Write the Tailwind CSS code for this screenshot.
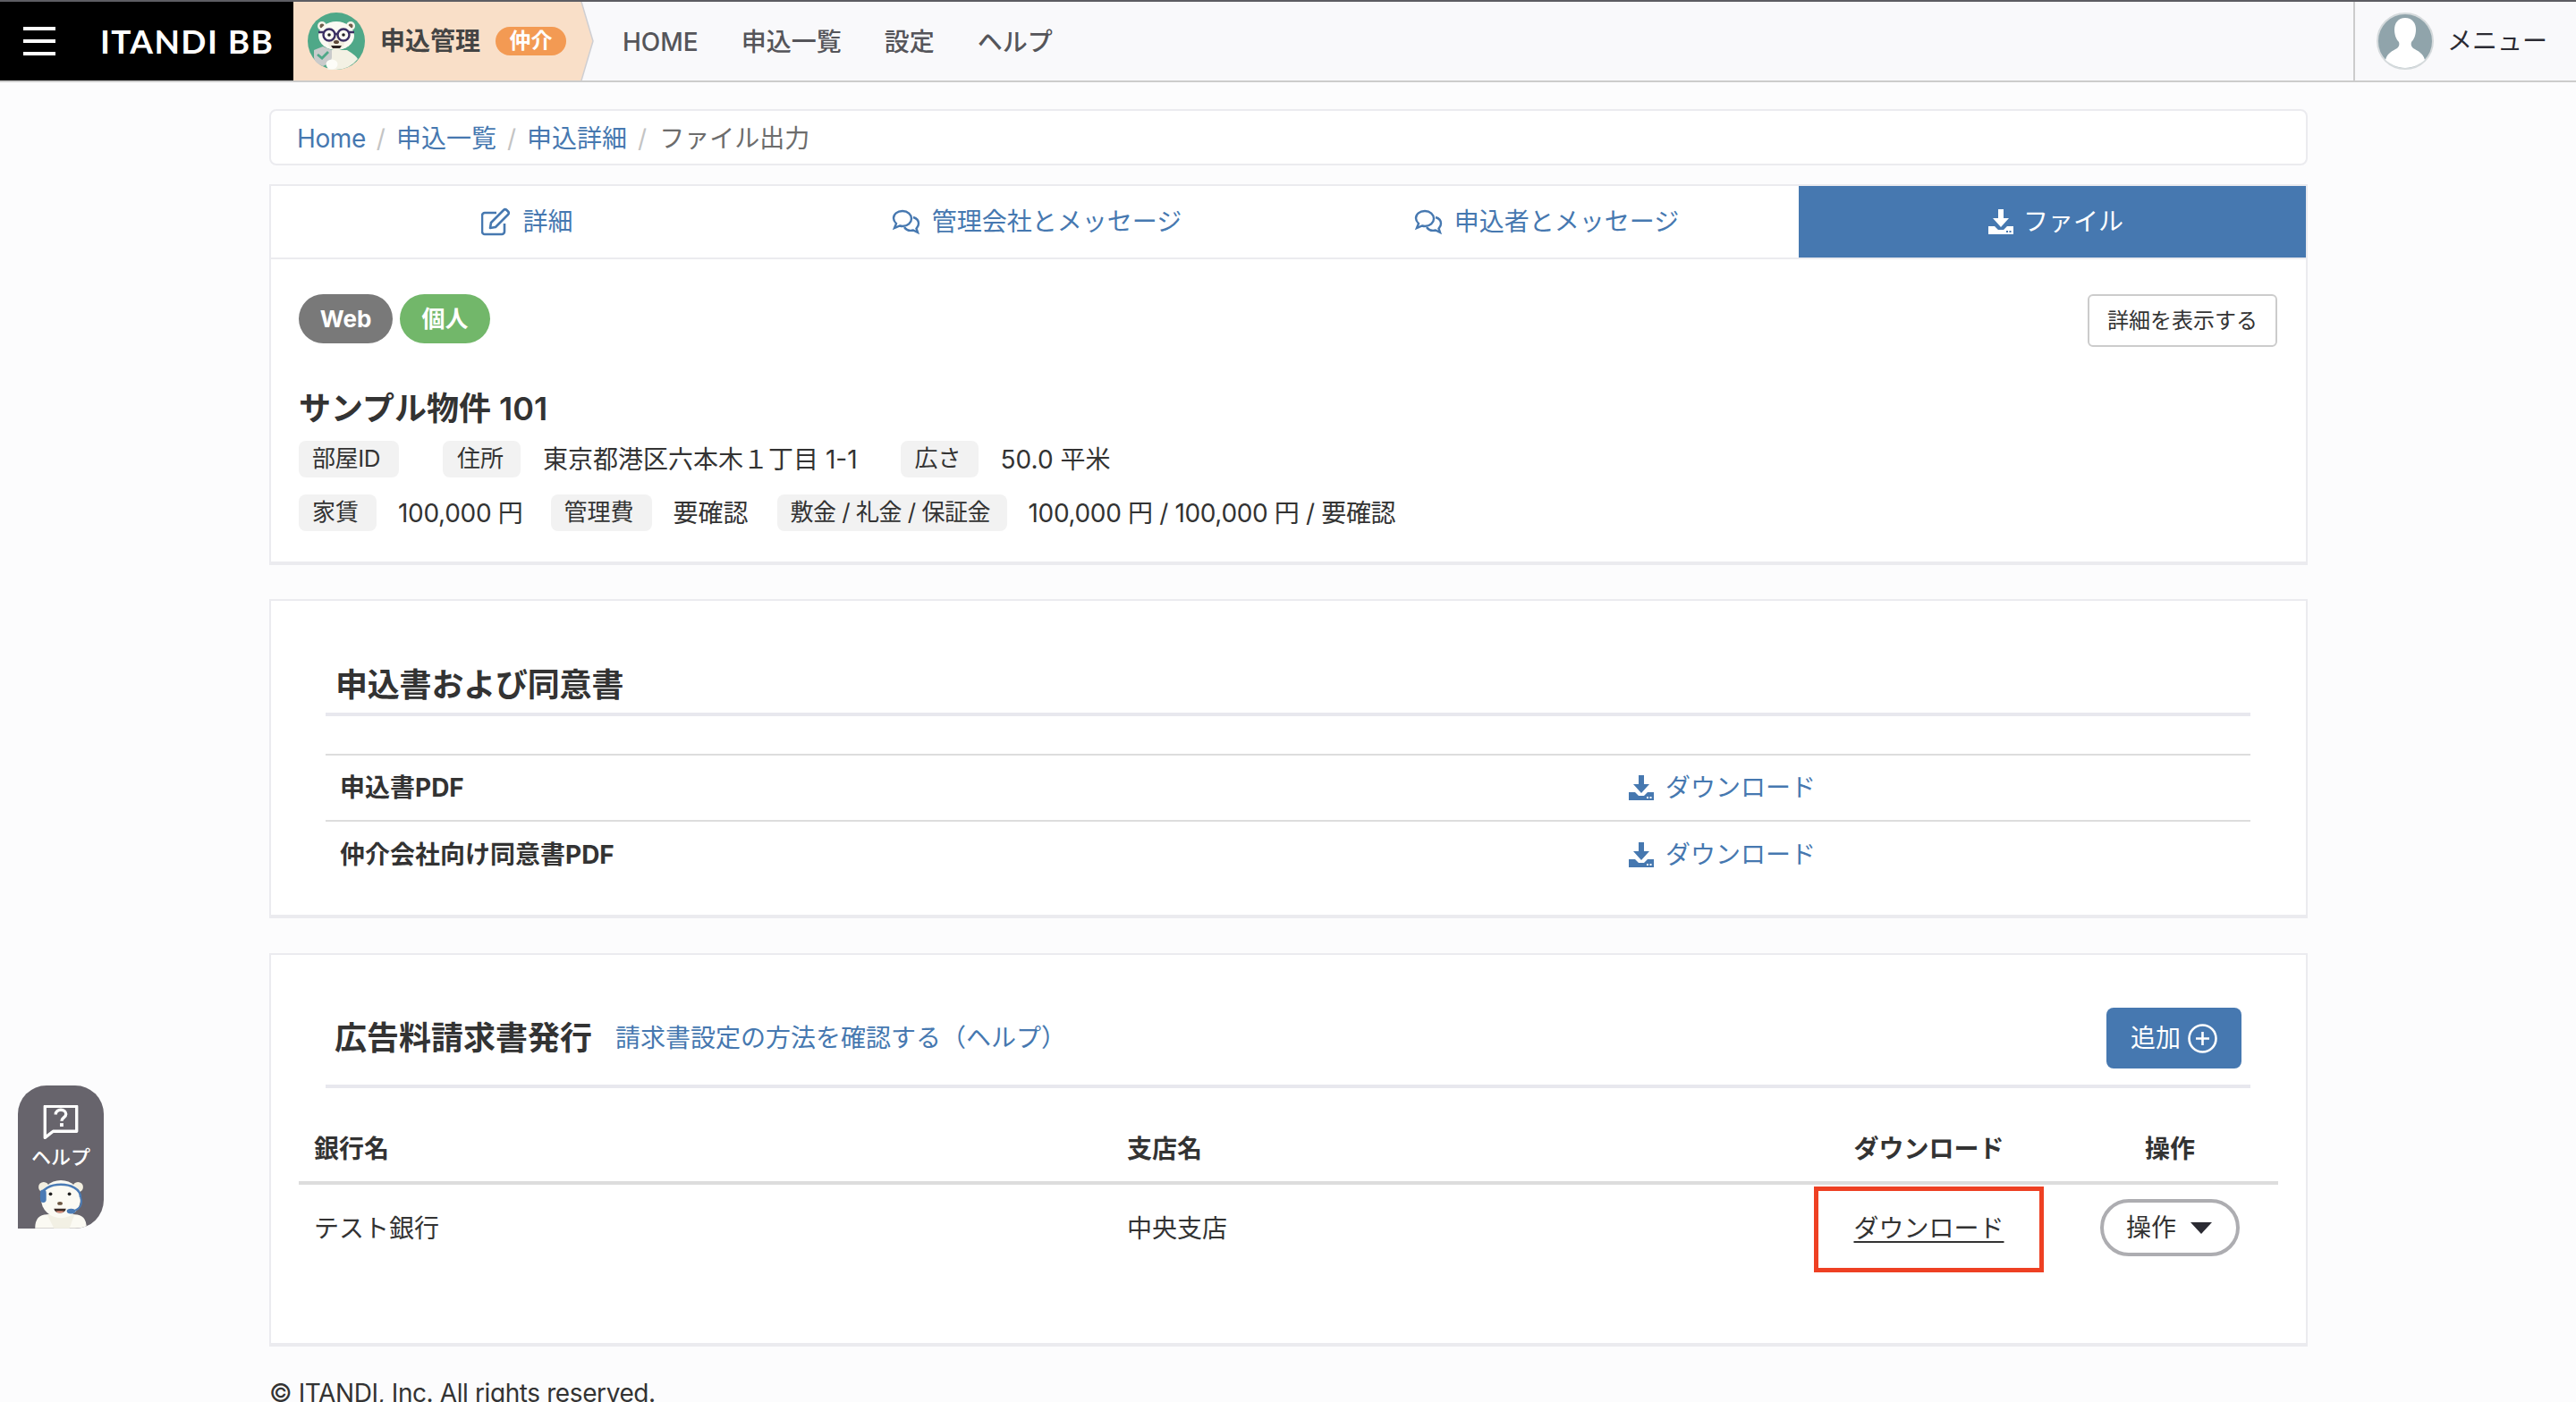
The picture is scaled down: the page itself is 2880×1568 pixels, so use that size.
<!DOCTYPE html>
<html lang="ja">
<head>
    <meta charset="utf-8">
    <title>ITANDI BB ファイル出力</title>
    <script src="https://cdn.jsdelivr.net/npm/@tailwindcss/browser@4"></script>
</head>
<body class="relative h-[1568px] overflow-hidden bg-[#fcfcfd] text-[28px] leading-[40px] text-[#333333] font-['Inter','Noto_Sans_CJK_JP',sans-serif]">

    <!-- header -->
    <header class="flex h-[92px] border-t-2 border-b-2 border-t-[#5d5d63] border-b-[#cccccc] bg-[#f9f9fb]">
        <div class="flex w-[328px] items-center bg-black text-white">
            <div class="ml-[26px] flex h-8 w-9 flex-col justify-between">
                <span class="h-1 bg-white"></span>
                <span class="h-1 bg-white"></span>
                <span class="h-1 bg-white"></span>
            </div>
            <span class="ml-[50px] whitespace-nowrap font-['Lato',sans-serif] text-[37px] font-bold tracking-[1.4px]">ITANDI BB</span>
        </div>
        <div class="flex w-[322px] items-center bg-[#f9dfc8]">
            <svg class="ml-[16px] h-16 w-[64px]" viewBox="0 0 64 64">
                <circle cx="32" cy="32" r="32" fill="#4fa888"/>
                <path d="M22 64 L26 42 H44 Q54 48 56 52 A32 32 0 0 1 32 64Z" fill="#f3f1e4"/>
                <circle cx="16" cy="15" r="5" fill="#f6f4ea"/>
                <circle cx="48" cy="15" r="5" fill="#f6f4ea"/>
                <circle cx="16" cy="15" r="2.500" fill="#6e5d4a"/>
                <circle cx="48" cy="15" r="2.500" fill="#6e5d4a"/>
                <ellipse cx="32" cy="26" rx="20" ry="16" fill="#fbfaf3"/>
                <ellipse cx="32" cy="34" rx="9" ry="8" fill="#f1eee0"/>
                <circle cx="24" cy="25" r="6.500" fill="#fbfaf3" stroke="#3b2f63" stroke-width="2.400"/>
                <circle cx="40" cy="25" r="6.500" fill="#fbfaf3" stroke="#3b2f63" stroke-width="2.400"/>
                <path d="M12 22 H18 M30 24 H34 M46 22 H52" stroke="#3b2f63" stroke-width="2.400"/>
                <circle cx="24" cy="25" r="1.800" fill="#222"/>
                <circle cx="40" cy="25" r="1.800" fill="#222"/>
                <ellipse cx="32" cy="33" rx="3" ry="2" fill="#5a4636"/>
                <path d="M26 37h12l-2 3h-8z" fill="#2a2222"/>
                <path d="M7 42l10-4 10 4v8q0 6-10 10q-10-4-10-10z" fill="#c9cbcb"/>
                <path d="M11 47l5 4 7-7" fill="none" stroke="#4fa888" stroke-width="2.800"/>
                <ellipse cx="27" cy="58" rx="6.500" ry="5.500" fill="#fdfdf8"/>
            </svg>
            <span class="ml-[17px] font-bold text-[#444444]">申込管理</span>
            <span class="ml-[17px] flex h-8 w-[79px] items-center justify-center rounded-full bg-[#f39a53] text-[24px] font-bold text-white">仲介</span>
        </div>
        <svg class="-ml-px h-[88px] w-[15px]" viewBox="0 0 15 88">
            <path d="M0 0 L1 0 L14 44 L1 88 L0 88Z" fill="#f9dfc8"/>
            <path d="M1 0 L14 44 L1 88" fill="none" stroke="#cfcfd3" stroke-width="1.500"/>
        </svg>
        <nav class="ml-[32px] flex items-center gap-[48px] pt-[2px] font-medium text-[#55555a]">
            <a>HOME</a>
            <a>申込一覧</a>
            <a>設定</a>
            <a>ヘルプ</a>
        </nav>
        <div class="ml-auto flex w-[249px] items-center border-l-2 border-[#cccccc] pl-[24px] text-[#2b2b33]">
            <svg class="h-[64px] w-[64px]" viewBox="0 0 64 64">
                <circle cx="32" cy="32" r="31" fill="#90a4ab" stroke="#d5dadc" stroke-width="2"/>
                <path d="M32 6c-8 0-12 6-12 13 0 6 2 11 5 14 1 3 0 5-2 7-5 3-11 5-13 13 5 5 14 9 22 9s17-4 22-9c-2-8-8-10-13-13-2-2-3-4-2-7 3-3 5-8 5-14 0-7-4-13-12-13z" fill="#fff"/>
            </svg>
            <span class="ml-[15px]">メニュー</span>
        </div>
    </header>

    <main class="ml-[301px] w-[2279px]">
        <!-- breadcrumb -->
        <div class="mt-[30px] flex h-[63px] items-center rounded-lg border-2 border-[#ebebef] bg-white pl-[29px] pt-[2px]">
            <a class="tracking-[-0.4px] text-[#4678b0]">Home</a><span class="mx-[12px] text-[#c4c4c4]">/</span>
            <a class="text-[#4678b0]">申込一覧</a><span class="mx-[12px] text-[#c4c4c4]">/</span>
            <a class="text-[#4678b0]">申込詳細</a><span class="mx-[12px] text-[#c4c4c4]">/</span>
            <span class="ml-[2px] text-[#6c6c6c]">ファイル出力</span>
        </div>

        <!-- property card -->
        <section class="mt-[21px] h-[426px] border-2 border-b-4 border-[#ebebef] bg-white">
            <div class="grid h-[82px] grid-cols-[569px_570px_569px_1fr] border-b-2 border-[#ebebef] text-[#4678b0]">
                <a class="flex items-center justify-center gap-[14px] pl-[4px]">
                    <svg class="h-[32px] w-[32px]" viewBox="0 0 32 32" fill="none" stroke="#4678b0" stroke-width="2.600" stroke-linejoin="round">
                        <path d="M26 18v9a3 3 0 0 1-3 3H4a3 3 0 0 1-3-3V9a3 3 0 0 1 3-3h13"/>
                        <path d="M10 23l1-6L25 3a2.500 2.500 0 0 1 3.500 0l1.500 1.500a2.500 2.500 0 0 1 0 3.500L16 22z"/>
                    </svg>
                    <span>詳細</span>
                </a>
                <a class="flex items-center justify-center gap-[13px] pl-[4px]">
                    <svg class="h-[30px] w-[32px]" viewBox="0 0 32 30" fill="none" stroke="#4678b0" stroke-width="2.400">
                        <path d="M12 3C6 3 2 6.500 2 11c0 2.500 1 4 3 6l-2 5 6-2.500c1 .3 2 .5 3 .5 6 0 10-4 10-8.500S18 3 12 3z"/>
                        <path d="M24 10c3.500 1 6 3.500 6 7 0 2-1 4-2.500 5.500l1.500 4.500-5-2.500c-4 1-8-.5-10-3.500"/>
                    </svg>
                    <span>管理会社とメッセージ</span>
                </a>
                <a class="flex items-center justify-center gap-[13px] pl-[5px]">
                    <svg class="h-[30px] w-[32px]" viewBox="0 0 32 30" fill="none" stroke="#4678b0" stroke-width="2.400">
                        <path d="M12 3C6 3 2 6.500 2 11c0 2.500 1 4 3 6l-2 5 6-2.500c1 .3 2 .5 3 .5 6 0 10-4 10-8.500S18 3 12 3z"/>
                        <path d="M24 10c3.500 1 6 3.500 6 7 0 2-1 4-2.500 5.500l1.500 4.500-5-2.500c-4 1-8-.5-10-3.500"/>
                    </svg>
                    <span>申込者とメッセージ</span>
                </a>
                <a class="flex items-center justify-center gap-[11px] pl-[8px] bg-[#4678b0] text-white">
                    <svg class="h-[28px] w-[28px]" viewBox="0 0 28 28">
                        <path d="M11 0h6v10h6L14 20 5 10h6z" fill="#ffffff"/>
                        <path d="M0 19h7l4 4h6l4-4h7v9H0z" fill="#ffffff"/>
                        <path d="M20 24h2v2h-2zM23.500 24h2v2h-2z" fill="#4678b0"/>
                    </svg>
                    <span>ファイル</span>
                </a>
            </div>
            <div class="relative px-[31px] pt-[39px]">
                <div class="flex gap-2">
                    <span class="flex h-[55px] w-[105px] items-center justify-center rounded-full bg-[#797979] text-[26px] font-bold text-white">Web</span>
                    <span class="flex h-[55px] w-[101px] items-center justify-center rounded-full bg-[#72b76a] text-[26px] font-bold text-white">個人</span>
                </div>
                <button class="absolute right-[32px] top-[39px] h-[59px] w-[212px] rounded-md border-2 border-[#cccccc] bg-white text-[24px] text-[#333333]">詳細を表示する</button>
                <h2 class="mt-[48px] text-[36px] leading-[50px] font-semibold">サンプル物件 101</h2>
                <div class="mt-[11px] flex h-[41px] items-center">
                    <span class="h-[41px] w-[112px] rounded-lg bg-[#f2f2f2] pl-[15px] text-[26px] leading-[39px] tracking-[-0.4px]">部屋ID</span>
                    <span class="ml-[49px] h-[41px] w-[87px] rounded-lg bg-[#f2f2f2] pl-[16px] text-[26px] leading-[39px]">住所</span>
                    <span class="ml-[25px]">東京都港区六本木１丁目 1-1</span>
                    <span class="ml-[48px] h-[41px] w-[87px] rounded-lg bg-[#f2f2f2] pl-[16px] text-[26px] leading-[39px]">広さ</span>
                    <span class="ml-[25px]">50.0 平米</span>
                </div>
                <div class="mt-[19px] flex h-[41px] items-center">
                    <span class="h-[41px] w-[87px] rounded-lg bg-[#f2f2f2] pl-[15px] text-[26px] leading-[39px]">家賃</span>
                    <span class="ml-[24px] tracking-[-0.3px]">100,000 円</span>
                    <span class="ml-[31px] h-[41px] w-[113px] rounded-lg bg-[#f2f2f2] pl-[15px] text-[26px] leading-[39px]">管理費</span>
                    <span class="ml-[24px]">要確認</span>
                    <span class="ml-[32px] h-[41px] w-[257px] whitespace-nowrap rounded-lg bg-[#f2f2f2] pl-[15px] text-[26px] leading-[39px] tracking-[-0.5px]">敷金 / 礼金 / 保証金</span>
                    <span class="ml-[24px] tracking-[-0.35px]">100,000 円 / 100,000 円 / 要確認</span>
                </div>
            </div>
        </section>

        <!-- pdf card -->
        <section class="mt-[38px] h-[357px] border-2 border-b-4 border-[#ebebef] bg-white pl-[61px] pr-[62px]">
            <h2 class="flex h-[129px] items-end border-b-4 border-[#e8e8ee] pb-[6px] pl-[11px] text-[36px] leading-[50px] font-semibold tracking-[-0.2px]">申込書および同意書</h2>
            <div class="mt-[42px] border-t-2 border-[#dddddd]">
                <div class="flex h-[74px] items-center border-b-2 border-[#dddddd] pl-[16px]">
                    <span class="w-[1441px] font-bold">申込書PDF</span>
                    <a class="flex items-center gap-[13px] text-[#4678b0]">
                        <svg class="h-[28px] w-[28px]" viewBox="0 0 28 28">
                            <path d="M11 0h6v10h6L14 20 5 10h6z" fill="#4678b0"/>
                            <path d="M0 19h7l4 4h6l4-4h7v9H0z" fill="#4678b0"/>
                            <path d="M20 24h2v2h-2zM23.500 24h2v2h-2z" fill="#ffffff"/>
                        </svg>
                        <span>ダウンロード</span>
                    </a>
                </div>
                <div class="flex h-[74px] items-center pl-[16px]">
                    <span class="w-[1441px] font-bold">仲介会社向け同意書PDF</span>
                    <a class="flex items-center gap-[13px] text-[#4678b0]">
                        <svg class="h-[28px] w-[28px]" viewBox="0 0 28 28">
                            <path d="M11 0h6v10h6L14 20 5 10h6z" fill="#4678b0"/>
                            <path d="M0 19h7l4 4h6l4-4h7v9H0z" fill="#4678b0"/>
                            <path d="M20 24h2v2h-2zM23.500 24h2v2h-2z" fill="#ffffff"/>
                        </svg>
                        <span>ダウンロード</span>
                    </a>
                </div>
            </div>
        </section>

        <!-- invoice card -->
        <section class="mt-[39px] h-[440px] border-2 border-b-4 border-[#ebebef] bg-white px-[31px]">
            <div class="ml-[30px] mr-[31px] flex h-[149px] items-center border-b-4 border-[#e8e8ee] pl-[10px] pr-[10px] pt-[41px]">
                <h2 class="text-[36px] leading-[50px] font-semibold">広告料請求書発行</h2>
                <a class="ml-[26px] text-[#4678b0]">請求書設定の方法を確認する（ヘルプ）</a>
                <button class="ml-auto flex h-[68px] w-[151px] items-center justify-center gap-[8px] rounded-lg bg-[#4678b0] text-white">
                    追加
                    <svg class="h-[33px] w-[33px]" viewBox="0 0 33 33" fill="none" stroke="#ffffff" stroke-width="2.600">
                        <circle cx="16.500" cy="16.500" r="15"/>
                        <path d="M16.500 9v15M9 16.500h15"/>
                    </svg>
                </button>
            </div>
            <div class="grid h-[108px] grid-cols-[909px_785px_278px_240px] items-end border-b-4 border-[#dddddd] pb-[16px] font-bold">
                <span class="pl-[17px]">銀行名</span>
                <span class="pl-[17px]">支店名</span>
                <span class="w-[257px] text-center">ダウンロード</span>
                <span class="text-center">操作</span>
            </div>
            <div class="mt-[2px] grid grid-cols-[909px_785px_278px_240px] items-center">
                <span class="pb-[3px] pl-[17px]">テスト銀行</span>
                <span class="pb-[3px] pl-[17px]">中央支店</span>
                <div class="flex h-[96px] w-[257px] items-center justify-center border-[5px] border-[#ee4023] pb-[3px]">
                    <a class="underline underline-offset-4">ダウンロード</a>
                </div>
                <div class="mb-[4px] flex justify-center">
                    <button class="flex h-[64px] w-[156px] items-center justify-center gap-[16px] rounded-full border-4 border-[#adadb1] bg-white pr-[2px]">
                        操作
                        <span class="h-0 w-0 border-x-[12px] border-t-[13px] border-x-transparent border-t-[#2b2b33]"></span>
                    </button>
                </div>
            </div>
        </section>

        <footer class="mt-[32px] text-[28px] leading-[40px] tracking-[-0.4px] text-[#333333]">© ITANDI, Inc. All rights reserved.</footer>
    </main>

    <!-- help widget, floats over the page -->
    <div class="absolute left-[20px] top-[1214px] flex h-[160px] w-[96px] flex-col items-center overflow-hidden rounded-t-[32px] rounded-br-[32px] bg-[#67646c] text-white">
        <svg class="mt-[22px] h-[40px] w-[40px]" viewBox="0 0 40 40">
            <path d="M1.500 1.500h37v29H11L1.500 38z" fill="none" stroke="#ffffff" stroke-width="3.500" stroke-linejoin="round"/>
            <path d="M14 11c0-3.500 3-5.500 6-5.500s6 2 6 5c0 4-5 4-5 8" fill="none" stroke="#ffffff" stroke-width="3.500"/>
            <rect x="19" y="21" width="4" height="4" fill="#ffffff"/>
        </svg>
        <span class="mt-[5px] text-[22px] leading-[30px] font-medium">ヘルプ</span>
        <svg class="mt-[11px] h-[56px] w-[68px]" viewBox="0 0 68 56">
            <circle cx="14" cy="8" r="6" fill="#f3efe0"/>
            <circle cx="54" cy="8" r="6" fill="#f3efe0"/>
            <path d="M4 56 Q4 40 18 40 H50 Q64 40 64 56Z" fill="#fbfaf3"/>
            <path d="M18 40 H50 L44 56 H26Z" fill="#f2f0e4"/>
            <ellipse cx="34" cy="22" rx="23" ry="22" fill="#fbfaf3"/>
            <path d="M11 20 C11 0 57 0 57 20" fill="none" stroke="#4a7bb5" stroke-width="2.500"/>
            <rect x="10" y="11" width="7" height="15" rx="3.500" fill="#4a7bb5"/>
            <path d="M57 20 C60 28 56 34 48 36" fill="none" stroke="#4a7bb5" stroke-width="2"/>
            <ellipse cx="46" cy="36" rx="5" ry="3" fill="#4a7bb5"/>
            <circle cx="22" cy="16" r="2" fill="#222"/>
            <circle cx="44" cy="16" r="2" fill="#222"/>
            <ellipse cx="33" cy="27" rx="3" ry="2" fill="#6b5540"/>
            <path d="M26 33h14q-1 5-7 5t-7-5z" fill="#3a2a25"/>
            <path d="M28 36h10q-2 2-5 2t-5-2z" fill="#ee9a86"/>
        </svg>
    </div>

</body>
</html>
